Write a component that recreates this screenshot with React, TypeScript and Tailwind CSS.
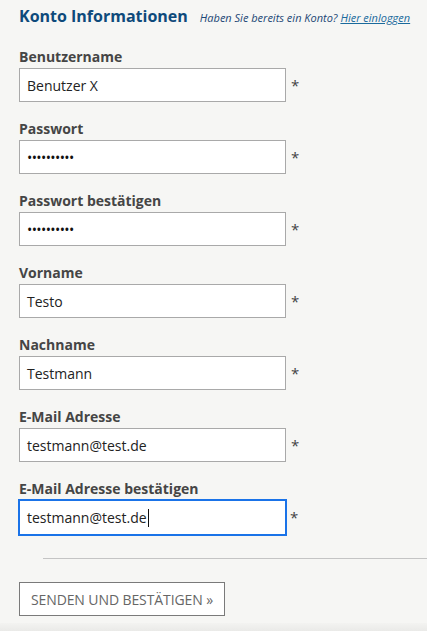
import React from "react";

const fields = [
  { label: "Benutzername", value: "Benutzer X", type: "text" },
  { label: "Passwort", value: "••••••••••", type: "pw" },
  { label: "Passwort bestätigen", value: "••••••••••", type: "pw" },
  { label: "Vorname", value: "Testo", type: "text" },
  { label: "Nachname", value: "Testmann", type: "text" },
  { label: "E-Mail Adresse", value: "testmann@test.de", type: "text" },
  { label: "E-Mail Adresse bestätigen", value: "testmann@test.de", type: "focus" },
];

export default function App() {
  return (
    <div
      className="w-[427px] h-[631px] bg-[#f6f6f4] overflow-hidden flex flex-col"
      style={{ fontFamily: '"Open Sans", "Liberation Sans", sans-serif' }}
    >
      <div className="flex-1">
        <div className="flex items-baseline pl-[19px] pt-[4px] h-[30px]">
          <h1 className="text-[16px] font-bold text-[#0e4a7b]">Konto Informationen</h1>
          <span className="ml-[12px] text-[11px] italic text-[#1b4675]">
            Haben Sie bereits ein Konto?{" "}
            <span className="underline text-[#1a6a9c]">Hier einloggen</span>
          </span>
        </div>
        <div className="pl-[19px] pt-[17px] flex flex-col gap-[17px]">
          {fields.map((f) => (
            <div key={f.label} className="flex flex-col">
              <div className="text-[14px] font-bold text-[#454545] leading-[20px] h-[20px] mb-[1px]">{f.label}</div>
              <div className="flex items-center">
                {f.type === "focus" ? (
                  <div className="w-[269px] h-[37px] -ml-[1px] -mt-[1px] -mb-[1px] border-2 border-[#1a73e8] bg-white flex items-center pl-[7px] text-[14px] text-[#222]">
                    <span>{f.value}</span>
                    <span className="inline-block w-[1px] h-[18px] bg-[#111] ml-[1px]" />
                  </div>
                ) : (
                  <div className="w-[267px] h-[34px] border border-[#a9a9a9] bg-white flex items-center pl-[7px] text-[14px] text-[#222]">
                    {f.type === "pw" ? (
                      <span className="text-[14px] tracking-[-0.6px] text-[#111]">{f.value}</span>
                    ) : (
                      f.value
                    )}
                  </div>
                )}
                <span className={`text-[15px] text-[#444] ${f.type === "focus" ? "ml-[3px]" : "ml-[5px]"}`}>*</span>
              </div>
            </div>
          ))}
        </div>
        <div className="ml-[43px] mt-[23px] border-t border-[#c4c4c4]" />
        <div className="pl-[19px] mt-[23px]">
          <button className="w-[206px] h-[34px] border border-[#7a7a7a] bg-white text-[14px] text-[#666] uppercase tracking-[-0.1px]">
            Senden und Bestätigen »
          </button>
        </div>
      </div>
      <div className="h-[8px] bg-gradient-to-b from-[#f3f3f1] to-[#eaeae8]" />
    </div>
  );
}
